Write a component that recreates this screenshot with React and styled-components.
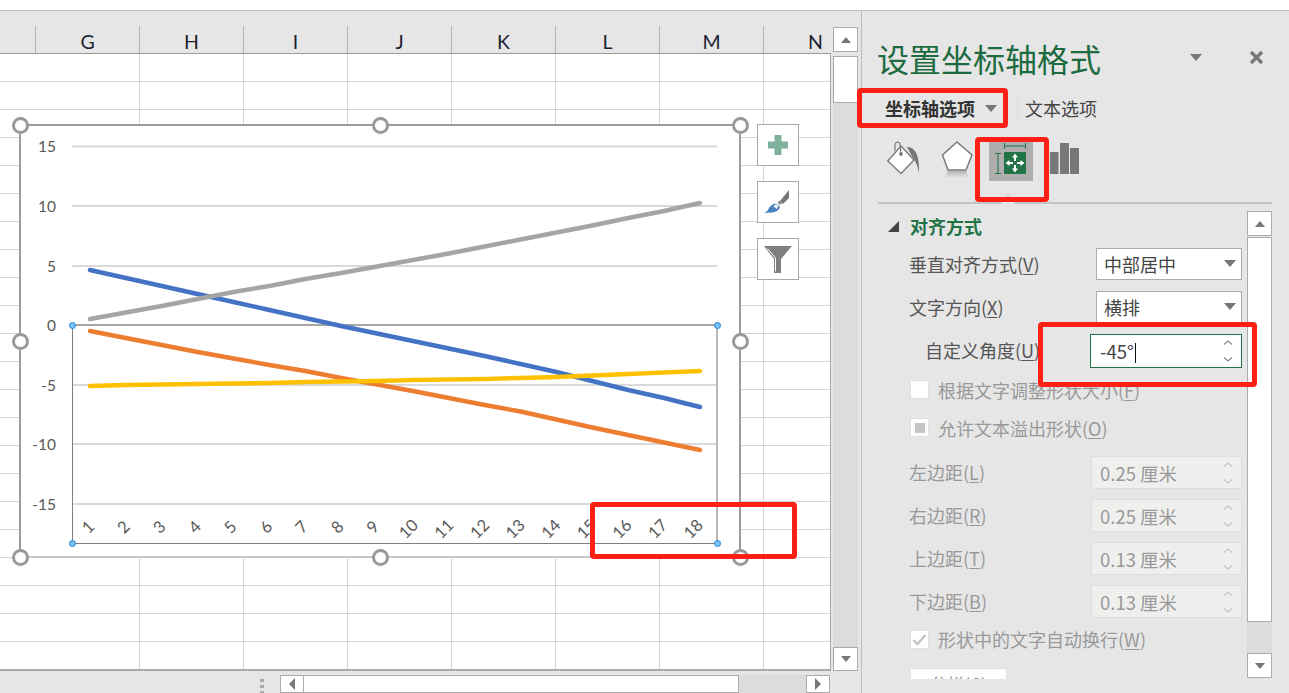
import React from "react";
import styled, { createGlobalStyle } from "styled-components";

const Global = createGlobalStyle`
  html, body { margin: 0; padding: 0; background: #fff; overflow: hidden; }
  * { box-sizing: border-box; }
  body { font-family: "Noto Sans CJK SC", "Liberation Sans", sans-serif; }
`;

const columns = ["G", "H", "I", "J", "K", "L", "M", "N"];
const gridY = [146.5, 206, 266, 325, 385, 444, 504];
const yLabels = ["15", "10", "5", "0", "-5", "-10", "-15"];
const xs = Array.from({ length: 18 }, (_, i) => 90 + i * 35.88);

const series = [
  { color: "#4472c4", ys: [270, 278, 286, 294, 302, 310, 318, 326, 333.5, 341, 348.5, 356, 364, 372, 381, 390, 398, 407] },
  { color: "#ed7d31", ys: [331, 338, 345, 352, 358.5, 365, 371, 378, 384.5, 391, 398, 405, 411.5, 419.5, 427.5, 435, 442.5, 450] },
  { color: "#a5a5a5", ys: [319, 312.5, 306, 299, 292, 286, 279, 273, 266.5, 260, 253.5, 246.5, 239.5, 232.5, 225.5, 218, 211, 203] },
  { color: "#ffc000", ys: [386, 385, 384.5, 384, 383.5, 383, 382, 381.5, 381, 380, 379.5, 379, 378, 377, 375.5, 374, 372.5, 371] },
];

const Page = styled.div`
  width: 1289px;
  height: 693px;
  display: flex;
  flex-direction: column;
  overflow: hidden;
  background: #e6e6e6;
`;

const TopStrip = styled.div`
  height: 11px;
  flex: none;
  background: #fff;
  border-bottom: 1px solid #bfbfbf;
`;

const Workspace = styled.div`
  flex: 1;
  display: flex;
  min-height: 0;
`;

const SheetColumn = styled.div`
  width: 861px;
  flex: none;
  display: flex;
  flex-direction: column;
`;

const SheetRow = styled.div`
  display: flex;
  height: 661px;
`;

const Sheet = styled.div`
  position: relative;
  width: 831px;
  display: flex;
  flex-direction: column;
`;

const ColumnHeaders = styled.div`
  height: 43px;
  flex: none;
  display: flex;
  border-bottom: 1px solid #9a9a9a;
  padding-top: 15px;
  padding-left: 35px;
`;

const ColumnHeader = styled.div`
  width: 104px;
  flex: none;
  height: 27px;
  border-left: 1px solid #b4b4b4;
  display: flex;
  align-items: center;
  justify-content: center;
  font-family: Lato, "Liberation Sans", sans-serif;
  font-size: 19.5px;
  color: #1b2230;
  padding-top: 3px;
  &:last-child { width: 67px; padding-left: 37px; padding-right: 0; }
`;

const Cells = styled.div`
  flex: 1;
  background-color: #fff;
  background-image:
    repeating-linear-gradient(to right, transparent 0 103px, #d4d4d4 103px 104px),
    repeating-linear-gradient(to bottom, transparent 0 27px, #d4d4d4 27px 28px);
  background-position: 36px 0, 0 0;
  border-right: 1px solid #a9a9a9;
  border-bottom: 2px solid #a9a9a9;
`;

const ChartFrame = styled.div`
  position: absolute;
  left: 19px;
  top: 113px;
  width: 722px;
  height: 434px;
  background: #fff;
  border: 2px solid #9c9c9c;
  border-bottom-color: #c8c8c8;
`;

const ChartDrawing = styled.svg`
  position: absolute;
  left: -21px;
  top: -126px;
  width: 780px;
  height: 570px;
  overflow: visible;
`;

const Handle = styled.span`
  position: absolute;
  left: ${(p) => p.$x - 8}px;
  top: ${(p) => p.$y - 8}px;
  width: 17px;
  height: 17px;
  border-radius: 50%;
  background: #fff;
  border: 3px solid #999;
`;

const AxisDot = styled.span`
  position: absolute;
  left: ${(p) => p.$x - 3}px;
  top: ${(p) => p.$y - 3}px;
  width: 7px;
  height: 7px;
  border-radius: 50%;
  background: #7cc1f2;
  border: 1px solid #1f86dd;
`;

const ChartTool = styled.button`
  position: absolute;
  left: 757px;
  top: ${(p) => p.$top}px;
  width: 42px;
  height: 42px;
  padding: 0;
  background: #fff;
  border: 1px solid #a9a9a9;
  display: flex;
  align-items: center;
  justify-content: center;
`;

const Callout = styled.div`
  position: absolute;
  left: ${(p) => p.$left}px;
  top: ${(p) => p.$top}px;
  width: ${(p) => p.$width}px;
  height: ${(p) => p.$height}px;
  border: 5px solid #ff2015;
  border-radius: 4px;
  pointer-events: none;
  z-index: 5;
`;

const VScroll = styled.div`
  width: 30px;
  flex: none;
  padding: 16px 3px 0 2px;
  display: flex;
  flex-direction: column;
`;

const ScrollBtn = styled.div`
  width: ${(p) => p.$w || 25}px;
  height: ${(p) => p.$h || 25}px;
  flex: none;
  background: #fff;
  border: 1px solid #ababab;
  display: flex;
  align-items: center;
  justify-content: center;
`;

const Arrow = styled.i`
  display: block;
  flex: none;
  width: 0;
  height: 0;
  ${(p) => p.$dir === "up" && `border: ${p.$size || 5.5}px solid transparent; border-top: 0; border-bottom: 6px solid #777;`}
  ${(p) => p.$dir === "down" && `border: ${p.$size || 5.5}px solid transparent; border-bottom: 0; border-top: ${p.$size ? 7 : 6}px solid #777;`}
  ${(p) => p.$dir === "left" && `border: 6px solid transparent; border-left: 0; border-right: 6px solid #777;`}
  ${(p) => p.$dir === "right" && `border: 6px solid transparent; border-right: 0; border-left: 6px solid #777;`}
`;

const VTrack = styled.div`
  flex: 1;
  margin-top: 4px;
  background: #dcdcdc;
`;

const VThumb = styled.div`
  height: 47px;
  background: #fff;
  border: 1px solid #ababab;
`;

const HScroll = styled.div`
  flex: 1;
  display: flex;
  align-items: flex-start;
  padding: 4px 0 0 251px;
`;

const SplitDots = styled.div`
  width: 29px;
  height: 17px;
  flex: none;
  padding: 4px 0 0 9px;
  display: flex;
  flex-direction: column;
  gap: 3px;
  & > span { width: 4px; height: 3px; flex: none; background: #aaa; }
`;

const HTrack = styled.div`
  width: 502px;
  height: 18px;
  flex: none;
  background: #dcdcdc;
`;

const HThumb = styled.div`
  width: 435px;
  height: 18px;
  background: #fff;
  border: 1px solid #ababab;
  border-left: 0;
`;

const Panel = styled.aside`
  position: relative;
  flex: 1;
  border-left: 1px solid #bdbdbd;
  padding-left: 16px;
  color: #444;
`;

const PanelHead = styled.div`
  height: 76px;
  display: flex;
  align-items: center;
  padding-top: 22px;
`;

const PanelTitle = styled.h1`
  margin: 0 0 4px -1px;
  font-size: 32px;
  font-weight: 400;
  color: #1d6b40;
  line-height: 1;
  white-space: nowrap;
`;

const HeadDrop = styled.span`
  margin: 0 0 6px 89px;
  display: flex;
`;

const CloseBtn = styled.span`
  margin: 0 0 6px 47px;
  display: flex;
`;

const Tabs = styled.div`
  height: 42px;
  display: flex;
  align-items: center;
  padding-left: 7px;
`;

const TabActive = styled.div`
  display: flex;
  align-items: center;
  gap: 10px;
  font-size: 18px;
  font-weight: 700;
  color: #333;
  width: 133px;
  border-right: 1px solid #dfdfdf;
  height: 24px;
`;

const Tab = styled.div`
  font-size: 18px;
  color: #444;
  margin-left: 7px;
`;

const IconRow = styled.div`
  position: relative;
  height: 75px;
  width: 394px;
  border-bottom: 2px solid #c4c4c4;
  display: flex;
  align-items: flex-start;
  padding: 8px 0 0 9px;
`;

const IconCell = styled.div`
  width: ${(p) => p.$w}px;
  height: 44px;
  flex: none;
  margin-right: ${(p) => p.$gap || 0}px;
  background: ${(p) => (p.$on ? "#aeaeae" : "transparent")};
  display: flex;
  align-items: center;
  & > svg { flex: none; overflow: visible; }
`;

const Notch = styled.svg`
  position: absolute;
  left: 122px;
  bottom: -2px;
  width: 16px;
  height: 11px;
`;

const PanelBody = styled.div`
  display: flex;
  height: 468px;
  margin-top: 7px;
`;

const Form = styled.div`
  width: 369px;
  flex: none;
  overflow: hidden;
  height: 468px;
`;

const SectionHead = styled.div`
  height: 31px;
  display: flex;
  align-items: center;
  gap: 11px;
  padding: 0 0 2px 10px;
  font-size: 18px;
  font-weight: 700;
  color: #217346;
`;

const Twist = styled.i`
  width: 11px;
  height: 11px;
  margin-top: 2px;
  background: #444;
  clip-path: polygon(100% 0, 100% 100%, 0 100%);
`;

const Row = styled.div`
  display: flex;
  align-items: center;
  height: ${(p) => p.$h || 43}px;
  margin-top: ${(p) => p.$top || 0}px;
  padding-left: ${(p) => p.$indent || 31}px;
  font-size: 18px;
  color: ${(p) => (p.$dim ? "#999" : "#555")};
  white-space: nowrap;
  & u { text-underline-offset: 2px; }
`;

const RowLabel = styled.label`
  width: ${(p) => p.$w || 187}px;
  flex: none;
`;

const Select = styled.div`
  width: 146px;
  height: 32px;
  background: #fff;
  border: 1px solid #ababab;
  display: flex;
  align-items: center;
  justify-content: space-between;
  padding: 0 5px 0 7px;
  color: #444;
`;

const Spin = styled.div`
  width: ${(p) => (p.$on ? 152 : 151)}px;
  height: ${(p) => (p.$on ? 34 : 33)}px;
  margin: ${(p) => (p.$on ? "3px 0 0 -6px" : "2px 0 0 -5px")};
  background: ${(p) => (p.$on ? "#fff" : "#efefee")};
  border: 1px solid ${(p) => (p.$on ? "#217346" : "#dedede")};
  display: flex;
  align-items: center;
  justify-content: space-between;
  padding: 0 6px 0 ${(p) => (p.$on ? 9 : 8)}px;
  font-size: 18.5px;
  color: ${(p) => (p.$on ? "#444" : "#999")};
`;

const Caret = styled.span`
  display: inline-block;
  width: 1px;
  height: 20px;
  background: #111;
  margin-left: 1px;
  vertical-align: -4px;
`;

const SpinArrows = styled.svg`
  width: 14px;
  height: 26px;
  flex: none;
`;

const CheckBox = styled.span`
  width: 19px;
  height: 19px;
  margin-right: 9px;
  flex: none;
  background: #fff;
  border: 1px solid #e0e0e0;
  display: flex;
  align-items: center;
  justify-content: center;
`;

const CheckFill = styled.i`
  width: 10px;
  height: 10px;
  background: #c4c4c4;
`;

const CutButton = styled.div`
  width: 97px;
  height: 30px;
  margin: 12px 0 0 32px;
  background: #fff;
  border: 1px solid #e0e0e0;
  color: #999;
  font-size: 17px;
  line-height: 30px;
  text-align: center;
  white-space: nowrap;
`;

const PanelScroll = styled.div`
  width: 25px;
  flex: none;
  display: flex;
  flex-direction: column;
`;

const PanelThumb = styled.div`
  height: 385px;
  flex: none;
  margin-top: 1px;
  background: #fff;
  border: 1px solid #ababab;
`;

const PanelTrack = styled.div`
  height: 31px;
  flex: none;
  background: #dcdcdc;
`;

const SpinGlyph = ({ color }) => (
  <SpinArrows viewBox="0 0 14 26" fill="none" stroke={color} strokeWidth="1.1">
    <path d="M3 6.5 7 3l4 3.5M3 19.5 7 23l4-3.5" />
  </SpinArrows>
);

const PaintIcon = () => (
  <svg width="34" height="36" viewBox="0 0 34 36">
    <path d="M20 6c8 0 13 8 12 27-1-9-4-13-6-16z" fill="#777" />
    <path d="M0.8 20 14 5l13 14-13 13.5z" fill="#fff" stroke="#7a7a7a" strokeWidth="1.4" />
    <path d="M8 10V3.5a2.6 2.6 0 0 1 5-.8l1 9.5" fill="none" stroke="#7a7a7a" strokeWidth="1.2" />
    <circle cx="14" cy="13" r="1.9" fill="#7a7a7a" />
  </svg>
);

const PentagonIcon = () => (
  <svg width="32" height="38" viewBox="0 0 32 38">
    <defs>
      <linearGradient id="shadow" x1="0" y1="0" x2="0" y2="1">
        <stop offset="0" stopColor="#b4b4b4" />
        <stop offset="1" stopColor="#e6e6e6" />
      </linearGradient>
    </defs>
    <path d="M6 31h18l3 7H3z" fill="url(#shadow)" />
    <path d="M15 2 30 15l-6 15H6L0.5 15z" fill="#fff" stroke="#7a7a7a" strokeWidth="1.5" />
  </svg>
);

const SizeIcon = () => (
  <svg width="44" height="44" viewBox="0 0 44 44">
    <path d="M15 9h22M15.5 6v6M36.5 6v6M6 16.5h6M9 16.5v20M6 36.5h6" stroke="#217346" strokeWidth="1" fill="none" />
    <rect x="15" y="15" width="22" height="22" rx="1" fill="#217346" />
    <path d="M26 20v4M26 28v4M20 26h4M28 26h4" stroke="#fff" strokeWidth="2" />
    <path d="M26 16.500l-3 4h6zM26 35.500l-3-4h6zM16.500 26l4-3v6zM35.500 26l-4-3v6z" fill="#fff" />
  </svg>
);

const BarsIcon = () => (
  <svg width="30" height="32" viewBox="0 0 30 32">
    <path d="M0 9h8.500v22H0zM10 0h9v31h-9zM20 5h9v26h-9z" fill="#777" />
  </svg>
);

const ChartSvg = () => (
  <ChartDrawing viewBox="0 0 780 570" fontFamily="Lato, 'Liberation Sans', sans-serif">
    {gridY.map((y, i) => (
      <g key={y}>
        <line x1="72" x2="717" y1={y} y2={y} stroke="#d9d9d9" strokeWidth="2" />
        <text x="56" y={y + 5.500} textAnchor="end" fontSize="15.500" fill="#595959">{yLabels[i]}</text>
      </g>
    ))}
    <path d="M72 325h646" stroke="#a6a6a6" strokeWidth="2" fill="none" />
    <path d="M717 325v218" stroke="#b8b8b8" strokeWidth="2" fill="none" />
    <path d="M72.500 325v218.500H717" stroke="#7f7f7f" strokeWidth="1" fill="none" />
    {series.map((s) => (
      <polyline
        key={s.color}
        points={s.ys.map((y, i) => `${xs[i]},${y}`).join(" ")}
        fill="none"
        stroke={s.color}
        strokeWidth="4.500"
        strokeLinecap="round"
        strokeLinejoin="round"
      />
    ))}
    {xs.map((x, i) => (
      <text
        key={x}
        transform={`translate(${88 + i * 35.6} ${i < 9 ? 527 : 529}) rotate(-45)`}
        textAnchor="middle"
        dy="0.35em"
        fontSize="16.500"
        fill="#595959"
      >
        {i + 1}
      </text>
    ))}
  </ChartDrawing>
);

const FieldRow = ({ label, hot, value, top }) => (
  <Row $dim $top={top}>
    <RowLabel>{label}(<u>{hot}</u>)</RowLabel>
    <Spin>
      <span>{value}</span>
      <SpinGlyph color="#c4c4c4" />
    </Spin>
  </Row>
);

export default function App() {
  return (
    <Page>
      <Global />
      <TopStrip />
      <Workspace>
        <SheetColumn>
          <SheetRow>
            <Sheet>
              <ColumnHeaders>
                {columns.map((c) => <ColumnHeader key={c}>{c}</ColumnHeader>)}
              </ColumnHeaders>
              <Cells />
              <ChartFrame>
                <ChartSvg />
              </ChartFrame>
              {[[20, 114], [380, 114], [740, 114], [20, 330], [740, 330], [20, 546], [380, 546], [740, 546]].map(([x, y]) => (
                <Handle key={`${x}-${y}`} $x={x} $y={y} />
              ))}
              {[[72, 314], [717, 314], [72, 532], [717, 532]].map(([x, y]) => (
                <AxisDot key={`${x}-${y}`} $x={x} $y={y} />
              ))}
              <ChartTool $top={113}>
                <svg width="20" height="20" viewBox="0 0 20 20">
                  <path d="M6.500 0h7v6.500H20v7h-6.500V20h-7v-6.500H0v-7h6.500z" fill="#7fb09c" />
                </svg>
              </ChartTool>
              <ChartTool $top={170}>
                <svg width="28" height="28" viewBox="0 0 28 28">
                  <path d="M25 2v8l-6 6-3-3z" fill="#777" />
                  <path d="M15.500 12.500l2.500 2.500-2 2-2.500-2.500z" fill="#888" />
                  <path d="M0 25c3-1 4-3 5-5 2-3 5-5 8-4l3 3c-1 3-3 6-16 6z" fill="#4a82bd" />
                  <path d="M9.500 18.500a2.600 2.600 0 0 1 4.500-1l-1 3.500z" fill="#fff" />
                </svg>
              </ChartTool>
              <ChartTool $top={227}>
                <svg width="28" height="27" viewBox="0 0 28 27">
                  <path d="M0 0h28L17 13v14h-7V13z" fill="#7f7f7f" />
                  <path d="M3.500 2.500 11.500 12v13.500" fill="none" stroke="#fff" strokeWidth="1" />
                </svg>
              </ChartTool>
              <Callout $left={590} $top={491} $width={207} $height={57} />
            </Sheet>
            <VScroll>
              <ScrollBtn><Arrow $dir="up" /></ScrollBtn>
              <VTrack><VThumb /></VTrack>
              <ScrollBtn $h={24}><Arrow $dir="down" /></ScrollBtn>
            </VScroll>
          </SheetRow>
          <HScroll>
            <SplitDots><span /><span /><span /></SplitDots>
            <ScrollBtn $w={24} $h={18}><Arrow $dir="left" /></ScrollBtn>
            <HTrack><HThumb /></HTrack>
            <ScrollBtn $w={24} $h={18}><Arrow $dir="right" /></ScrollBtn>
          </HScroll>
        </SheetColumn>
        <Panel>
          <PanelHead>
            <PanelTitle>设置坐标轴格式</PanelTitle>
            <HeadDrop><Arrow $dir="down" $size={6.5} /></HeadDrop>
            <CloseBtn>
              <svg width="15" height="15" viewBox="0 0 15 15">
                <path d="M2 2l11 11M13 2 2 13" stroke="#777" strokeWidth="3.200" />
              </svg>
            </CloseBtn>
          </PanelHead>
          <Tabs>
            <TabActive>坐标轴选项<Arrow $dir="down" $size={6.5} /></TabActive>
            <Tab>文本选项</Tab>
          </Tabs>
          <IconRow>
            <IconCell $w={44} $gap={11}><PaintIcon /></IconCell>
            <IconCell $w={47}><PentagonIcon /></IconCell>
            <IconCell $w={44} $on $gap={17}><SizeIcon /></IconCell>
            <IconCell $w={30}><BarsIcon /></IconCell>
            <Notch viewBox="0 0 16 11">
              <path d="M0 11 8 1l8 10" fill="#e6e6e6" stroke="#c4c4c4" strokeWidth="1" />
            </Notch>
          </IconRow>
          <PanelBody>
            <Form>
              <SectionHead><Twist />对齐方式</SectionHead>
              <Row>
                <RowLabel>垂直对齐方式(<u>V</u>)</RowLabel>
                <Select>中部居中<Arrow $dir="down" $size={6} /></Select>
              </Row>
              <Row>
                <RowLabel>文字方向(<u>X</u>)</RowLabel>
                <Select>横排<Arrow $dir="down" $size={6} /></Select>
              </Row>
              <Row $indent={47}>
                <RowLabel $w={171}>自定义角度(<u>U</u>)</RowLabel>
                <Spin $on>
                  <span>-45°<Caret /></span>
                  <SpinGlyph color="#888" />
                </Spin>
              </Row>
              <Row $dim $h={37} $indent={32}>
                <CheckBox />根据文字调整形状大小(<u>F</u>)
              </Row>
              <Row $dim $h={39} $indent={32}>
                <CheckBox><CheckFill /></CheckBox>允许文本溢出形状(<u>O</u>)
              </Row>
              <FieldRow label="左边距" hot="L" value="0.25 厘米" top={3} />
              <FieldRow label="右边距" hot="R" value="0.25 厘米" />
              <FieldRow label="上边距" hot="T" value="0.13 厘米" />
              <FieldRow label="下边距" hot="B" value="0.13 厘米" />
              <Row $dim $h={34} $indent={32}>
                <CheckBox>
                  <svg width="15" height="13" viewBox="0 0 15 13">
                    <path d="M1.500 7l4 4 8-9" fill="none" stroke="#c4c4c4" strokeWidth="2.400" />
                  </svg>
                </CheckBox>
                形状中的文字自动换行(<u>W</u>)
              </Row>
              <CutButton>分栏(C)</CutButton>
            </Form>
            <PanelScroll>
              <ScrollBtn><Arrow $dir="up" /></ScrollBtn>
              <PanelThumb />
              <PanelTrack />
              <ScrollBtn><Arrow $dir="down" /></ScrollBtn>
            </PanelScroll>
          </PanelBody>
          <Callout $left={-5} $top={77} $width={151} $height={40} />
          <Callout $left={113} $top={126} $width={74} $height={65} />
          <Callout $left={176} $top={311} $width={219} $height={65} />
        </Panel>
      </Workspace>
    </Page>
  );
}
